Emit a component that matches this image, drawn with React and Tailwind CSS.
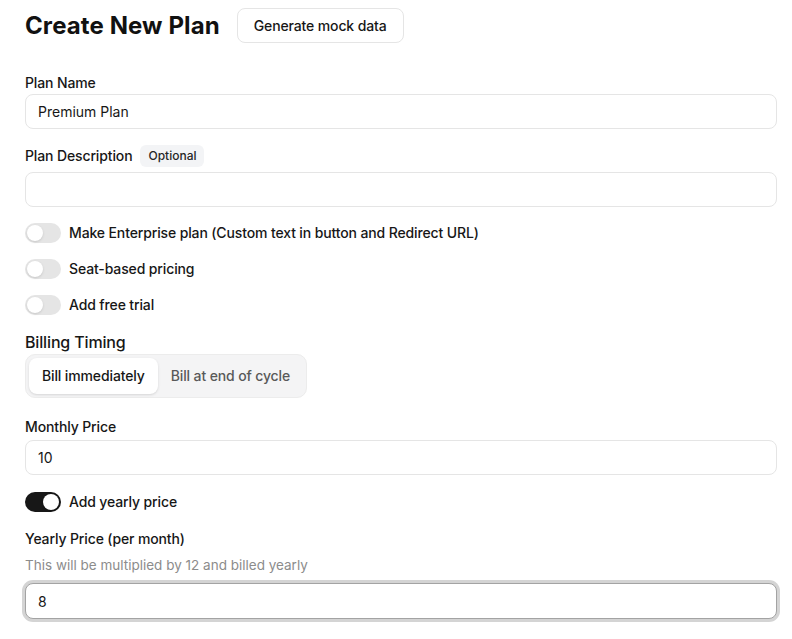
import { useState } from "react"

const Toggle = ({ on, onClick }) => (
  <button
    type="button"
    onClick={onClick}
    className={`relative h-5 w-9 shrink-0 rounded-full transition-colors ${
      on ? "bg-[#171717]" : "bg-[#e5e5e5]"
    }`}
  >
    <span
      className={`absolute top-[2px] h-4 w-4 rounded-full bg-white shadow-sm transition-all ${
        on ? "left-[18px]" : "left-[2px]"
      }`}
    />
  </button>
)

const Label = ({ children, className = "" }) => (
  <div className={`text-sm font-medium leading-5 tracking-[-0.13px] text-[#171717] ${className}`}>
    {children}
  </div>
)

const Input = ({ value, focused, className = "" }) => (
  <input
    defaultValue={value}
    className={`h-[35px] w-full rounded-lg border bg-white px-3 text-sm text-[#171717] outline-none ${
      focused ? "border-[#a3a3a3] ring-[3px] ring-[#d4d4d4]" : "border-[#e5e5e5]"
    } ${className}`}
  />
)

export default function App() {
  const [enterprise, setEnterprise] = useState(false)
  const [seats, setSeats] = useState(false)
  const [trial, setTrial] = useState(false)
  const [yearly, setYearly] = useState(true)
  const [timing, setTiming] = useState("now")

  return (
    <div
      className="min-h-screen bg-white pl-[25px] pr-[15px] pt-[8px] text-[#171717]"
      style={{ fontFamily: "Inter, 'Noto Sans', sans-serif" }}
    >
      <div className="flex items-center gap-[17px]">
        <h1 className="text-2xl font-bold tracking-[0.1px] text-[#111]">Create New Plan</h1>
        <button className="h-[35px] rounded-lg border border-[#e5e5e5] bg-white px-4 text-sm font-medium tracking-[-0.13px] text-[#171717]">
          Generate mock data
        </button>
      </div>

      <Label className="mt-[30px] mb-[1px]">Plan Name</Label>
      <Input value="Premium Plan" />

      <div className="mt-[16px] mb-[5px] flex h-[22px] items-center gap-2">
        <Label>Plan Description</Label>
        <span className="rounded-md bg-[#f3f4f6] px-2 py-[3px] text-xs font-medium leading-4 text-[#262626]">
          Optional
        </span>
      </div>
      <Input value="" />

      <div className="mt-[16px] flex flex-col gap-4">
        <div className="flex items-center gap-2">
          <Toggle on={enterprise} onClick={() => setEnterprise(!enterprise)} />
          <Label>Make Enterprise plan (Custom text in button and Redirect URL)</Label>
        </div>
        <div className="flex items-center gap-2">
          <Toggle on={seats} onClick={() => setSeats(!seats)} />
          <Label>Seat-based pricing</Label>
        </div>
        <div className="flex items-center gap-2">
          <Toggle on={trial} onClick={() => setTrial(!trial)} />
          <Label>Add free trial</Label>
        </div>
      </div>

      <div className="mt-[15px] text-base font-medium leading-6 tracking-[-0.15px]">Billing Timing</div>
      <div className="inline-flex h-[44px] items-center rounded-[10px] border border-[#ececec] bg-[#f4f4f5] px-[3px]">
        <button
          onClick={() => setTiming("now")}
          className={`h-9 rounded-lg px-[13px] text-sm font-medium tracking-[-0.13px] ${
            timing === "now" ? "bg-white text-[#171717] shadow-sm" : "text-[#595959]"
          }`}
        >
          Bill immediately
        </button>
        <button
          onClick={() => setTiming("end")}
          className={`h-9 rounded-lg px-[13px] text-sm font-medium tracking-[-0.13px] ${
            timing === "end" ? "bg-white text-[#171717] shadow-sm" : "text-[#595959]"
          }`}
        >
          Bill at end of cycle
        </button>
      </div>

      <Label className="mt-[19px] mb-[3px]">Monthly Price</Label>
      <Input value="10" />

      <div className="mt-[17px] flex items-center gap-2">
        <Toggle on={yearly} onClick={() => setYearly(!yearly)} />
        <Label>Add yearly price</Label>
      </div>

      {yearly && (
        <>
          <Label className="mt-[17px]">Yearly Price (per month)</Label>
          <div className="mt-[6px] mb-[8px] text-[13.5px] leading-5 text-[#8c8c8c]">
            This will be multiplied by 12 and billed yearly
          </div>
          <Input value="8" focused className="h-[36px]" />
        </>
      )}
    </div>
  )
}
